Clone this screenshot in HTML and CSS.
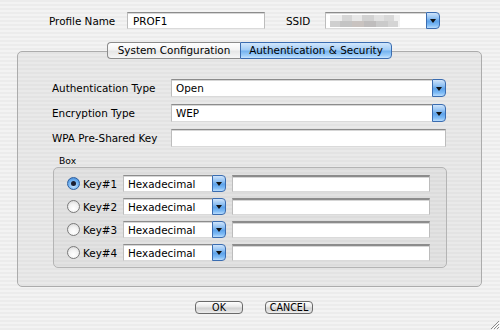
FILE: index.html
```html
<!DOCTYPE html>
<html>
<head>
<meta charset="utf-8">
<link rel="stylesheet" href="styles.css">
</head>
<body>
<div class="win">
  <div class="top">
    <span class="lbl lbl-profile">Profile Name</span>
    <div class="field w-profile">PROF1</div>
    <span class="lbl lbl-ssid">SSID</span>
    <div class="combo w-ssid">
      <div class="combo-text"><div class="blur"><div class="blur-a"></div><div class="blur-b"></div></div></div>
      <div class="combo-btn"><span class="tri"></span></div>
    </div>
  </div>

  <div class="tabbox">
    <div class="tabs">
      <div class="tab tab-left">System Configuration</div>
      <div class="tab tab-right tab-sel">Authentication &amp; Security</div>
    </div>
    <div class="panel">
      <div class="frow">
        <span class="flbl">Authentication Type</span>
        <div class="combo w-main">
          <div class="combo-text">Open</div>
          <div class="combo-btn"><span class="tri"></span></div>
        </div>
      </div>
      <div class="frow">
        <span class="flbl">Encryption Type</span>
        <div class="combo w-main">
          <div class="combo-text">WEP</div>
          <div class="combo-btn"><span class="tri"></span></div>
        </div>
      </div>
      <div class="frow">
        <span class="flbl">WPA Pre-Shared Key</span>
        <div class="field w-main"></div>
      </div>

      <div class="glbl">Box</div>
      <div class="group">
        <div class="krow">
          <span class="radio radio-on"><span class="dot"></span></span>
          <span class="klbl">Key#1</span>
          <div class="combo w-hex">
            <div class="combo-text">Hexadecimal</div>
            <div class="combo-btn"><span class="tri"></span></div>
          </div>
          <div class="field kfield"></div>
        </div>
        <div class="krow">
          <span class="radio"></span>
          <span class="klbl">Key#2</span>
          <div class="combo w-hex">
            <div class="combo-text">Hexadecimal</div>
            <div class="combo-btn"><span class="tri"></span></div>
          </div>
          <div class="field kfield"></div>
        </div>
        <div class="krow">
          <span class="radio"></span>
          <span class="klbl">Key#3</span>
          <div class="combo w-hex">
            <div class="combo-text">Hexadecimal</div>
            <div class="combo-btn"><span class="tri"></span></div>
          </div>
          <div class="field kfield"></div>
        </div>
        <div class="krow">
          <span class="radio"></span>
          <span class="klbl">Key#4</span>
          <div class="combo w-hex">
            <div class="combo-text">Hexadecimal</div>
            <div class="combo-btn"><span class="tri"></span></div>
          </div>
          <div class="field kfield"></div>
        </div>
      </div>
    </div>
  </div>

  <div class="buttons">
    <div class="btn">OK</div>
    <div class="btn">CANCEL</div>
  </div>

  <svg class="grip" width="11" height="11" viewBox="0 0 11 11">
    <path d="M10 2 L2 10 M10 5 L5 10 M10 8 L8 10" stroke="#8a8a8a" stroke-width="1"/>
    <path d="M11 3 L3 11 M11 6 L6 11 M11 9 L9 11" stroke="#ffffff" stroke-width="1"/>
  </svg>
</div>
</body>
</html>
```

FILE: styles.css
```css
html, body {
  margin: 0;
  padding: 0;
}
body {
  width: 500px;
  height: 330px;
  overflow: hidden;
  font-family: "DejaVu Sans", "Liberation Sans", sans-serif;
  font-size: 10.4px;
  color: #000;
}
.win {
  position: relative;
  width: 500px;
  height: 330px;
  background: repeating-linear-gradient(to bottom, #ececec 0, #ececec 2px, #f3f3f3 2px, #f3f3f3 4px);
  padding-top: 12px;
  box-sizing: border-box;
}
.top {
  display: flex;
  align-items: center;
  height: 17px;
  padding-left: 49px;
}
.lbl { display: block; }
.lbl-profile { width: 78px; }
.lbl-ssid { width: 39px; margin-left: 21px; }

.field {
  box-sizing: border-box;
  height: 17px;
  background: #fff;
  border-top: 1px solid #8c8c8c;
  border-left: 1px solid #bcbcbc;
  border-right: 1px solid #bcbcbc;
  border-bottom: 1px solid #dadada;
  box-shadow: inset 0 1px 0 #d6d6d6;
  padding: 1px 4px 0;
  line-height: 14px;
}
.w-profile { width: 138px; padding-left: 5px; }

.combo {
  display: flex;
  height: 17px;
  box-sizing: border-box;
}
.combo-text {
  flex: 1;
  background: #fff;
  border-top: 1px solid #8c8c8c;
  border-left: 1px solid #bcbcbc;
  border-bottom: 1px solid #dadada;
  box-shadow: inset 0 1px 0 #d6d6d6;
  padding: 1px 4px 0;
  line-height: 14px;
  overflow: hidden;
}
.combo-btn {
  width: 14px;
  box-sizing: border-box;
  border: 1px solid #3a6cb0;
  border-radius: 0 4px 4px 0;
  background: linear-gradient(to bottom, #cfe4fb 0%, #8fc0f2 35%, #5ea3ea 55%, #7dbaf5 80%, #b8dcfd 100%);
  display: flex;
  align-items: center;
  justify-content: center;
}
.tri {
  width: 0;
  height: 0;
  border-left: 3px solid transparent;
  border-right: 3px solid transparent;
  border-top: 4px solid #111;
  margin-top: 1px;
}
.w-ssid { width: 115px; }
.w-main { width: 275px; }
.w-hex { width: 103px; }

.blur {
  margin-top: 1px;
  width: 70px;
}
.blur-a {
  height: 6px;
  background: linear-gradient(to right, #ededed 0, #ededed 12px, #d6d6d6 12px, #d6d6d6 22px, #e8e8e8 22px, #e8e8e8 32px, #d2d2d2 32px, #d2d2d2 44px, #e2e2e2 44px, #e2e2e2 54px, #d8d8d8 54px, #d8d8d8 64px, #f0f0f0 64px);
}
.blur-b {
  height: 6px;
  background: linear-gradient(to right, #cfcfcf 0, #cfcfcf 10px, #c4c4c4 10px, #c4c4c4 22px, #c9c3c0 22px, #c9c3c0 34px, #bfbdbd 34px, #bfbdbd 46px, #cacaca 46px, #cacaca 58px, #d4d4d4 58px, #d4d4d4 68px, #f4f4f4 68px);
}

.tabbox {
  margin-left: 17px;
  width: 465px;
  margin-top: 13px;
}
.tabs {
  position: relative;
  z-index: 1;
  display: flex;
  justify-content: center;
  height: 17px;
  margin-bottom: -8px;
}
.tab {
  box-sizing: border-box;
  height: 17px;
  line-height: 15px;
  text-align: center;
  border: 1px solid #8c8c8c;
  background: linear-gradient(to bottom, #ffffff 0%, #f4f4f4 45%, #e6e6e6 55%, #f6f6f6 100%);
}
.tab-left {
  width: 133px;
  border-radius: 4px 0 0 4px;
  border-right: none;
}
.tab-right {
  width: 152px;
  border-radius: 0 4px 4px 0;
}
.tab-sel {
  border-color: #3a6cb0;
  background: linear-gradient(to bottom, #d2e7fc 0%, #a3cdf6 45%, #76b4f0 55%, #a2d0fa 85%, #c9e5ff 100%);
}
.panel {
  box-sizing: border-box;
  height: 236px;
  border: 1px solid #acacac;
  border-radius: 5px;
  background: repeating-linear-gradient(to bottom, #e3e3e3 0, #e3e3e3 2px, #e9e9e9 2px, #e9e9e9 4px);
  padding: 27px 0 0 34px;
}
.frow {
  display: flex;
  align-items: center;
  height: 18px;
  margin-bottom: 7px;
}
.frow .combo, .frow .field { height: 18px; }
.flbl { width: 119px; }
.glbl {
  margin-top: 8px;
  margin-left: 7px;
  height: 12px;
  line-height: 12px;
  font-size: 9.2px;
}
.group {
  box-sizing: border-box;
  margin-left: 1px;
  width: 394px;
  height: 101px;
  border: 1px solid #b4b4b4;
  border-radius: 5px;
  background: repeating-linear-gradient(to bottom, #dcdcdc 0, #dcdcdc 2px, #e2e2e2 2px, #e2e2e2 4px);
  padding: 7px 0 0 13px;
}
.krow {
  display: flex;
  align-items: center;
  height: 17px;
  margin-bottom: 6px;
}
.radio {
  box-sizing: border-box;
  width: 13px;
  height: 13px;
  border-radius: 50%;
  border: 1px solid #7a7a7a;
  background: radial-gradient(circle at 50% 70%, #ffffff 0%, #f2f2f2 50%, #cfcfcf 100%);
  display: flex;
  align-items: center;
  justify-content: center;
}
.radio-on {
  border-color: #2e5f9e;
  background: radial-gradient(circle at 50% 70%, #c8e4ff 0%, #6eb0f0 55%, #3a7fd0 100%);
}
.dot {
  width: 5px;
  height: 5px;
  border-radius: 50%;
  background: #1a1f33;
}
.klbl { width: 40px; margin-left: 3px; }
.kfield { width: 198px; margin-left: 6px; border-top-width: 2px; }

.buttons {
  display: flex;
  margin-left: 195px;
  margin-top: 14px;
  gap: 22px;
}
.btn {
  box-sizing: border-box;
  width: 48px;
  height: 13px;
  line-height: 11px;
  font-size: 9.6px;
  text-align: center;
  border: 1px solid #6a6a6a;
  border-radius: 4px;
  background: linear-gradient(to bottom, #ffffff 0%, #e8e8e8 45%, #d2d2d2 55%, #ececec 100%);
}
.grip {
  position: absolute;
  right: 0;
  bottom: 0;
}
```
